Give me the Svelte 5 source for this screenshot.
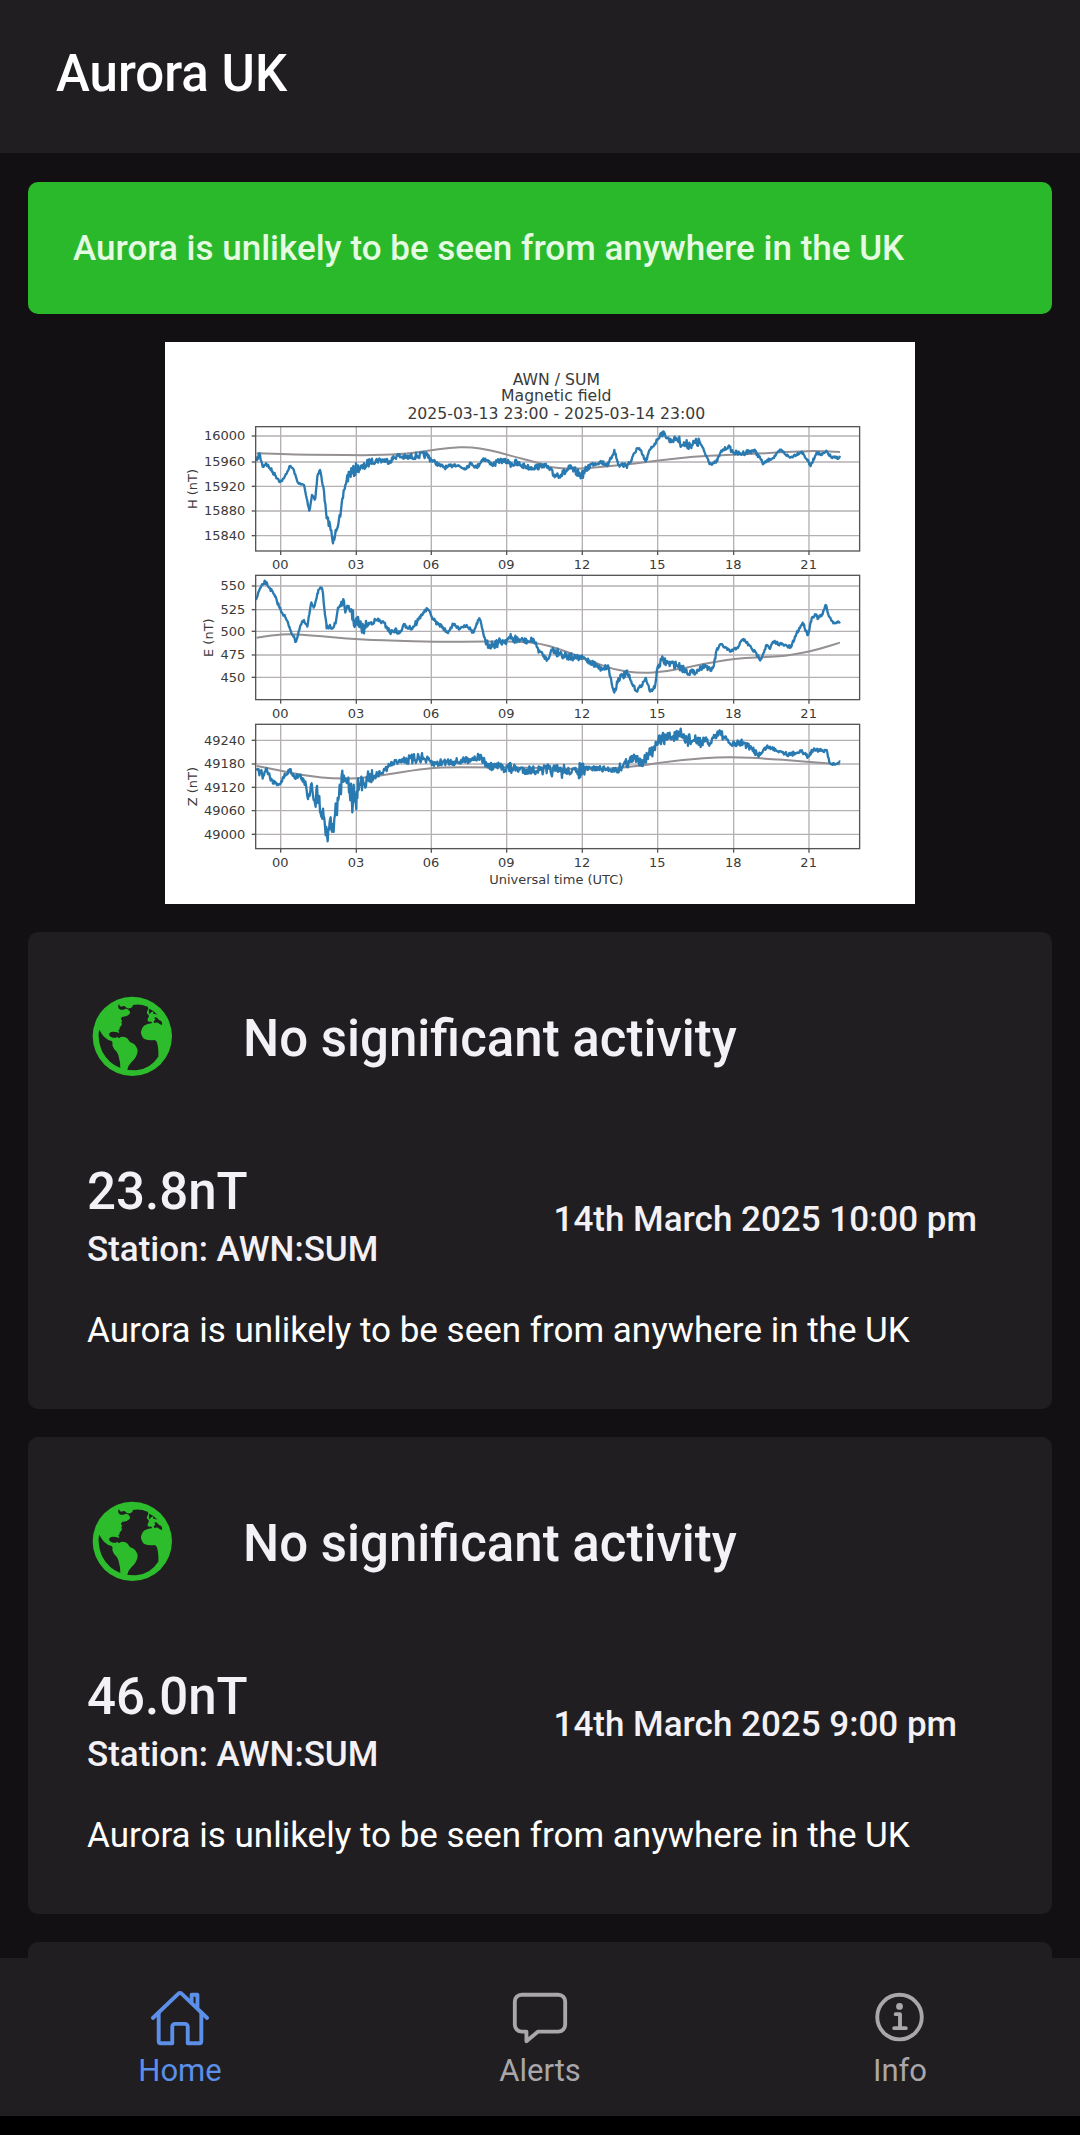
<script>
    let tabs = ["Home", "Alerts", "Info"];
    let current = "Home";
    let status = "Aurora is unlikely to be seen from anywhere in the UK";
    let activities = [
        { value: "23.8nT", date: "14th March 2025 10:00 pm" },
        { value: "46.0nT", date: "14th March 2025 9:00 pm" },
    ];

    let hours = ["00", "03", "06", "09", "12", "15", "18", "21"];
    let hourX = [362, 589, 814, 1040, 1267, 1493, 1721, 1947];

    // points are [x, y] or [x, y, jitter], the jitter stays until the next one
    let panels = [
        {
            label: "H (nT)",
            labelX: 110,
            top: 275,
            ticks: [[16000, 303], [15960, 381], [15920, 454], [15880, 528], [15840, 602]],
            base: [[290, 355], [400, 359], [500, 359], [620, 361], [720, 358], [800, 348], [870, 338], [930, 336], [990, 345], [1040, 359], [1140, 385], [1170, 397], [1240, 402], [1330, 396], [1420, 386], [1500, 376], [1600, 365], [1700, 360], [1800, 356], [1900, 349], [1980, 348], [2040, 351]],
            line: [[290, 378, 6], [298, 355], [308, 395], [318, 385], [330, 400], [345, 420], [362, 440, 3], [372, 430], [390, 393], [400, 402], [412, 440], [422, 448], [432, 450], [440, 490], [448, 527, 7], [456, 480], [466, 490], [472, 425], [480, 405], [490, 455], [500, 550, 11], [510, 570], [519, 625], [527, 585], [541, 545], [552, 465], [560, 435, 18], [570, 410], [576, 415], [590, 400, 13], [610, 398], [630, 380, 9], [660, 375], [690, 378], [710, 362], [740, 368, 10], [770, 362], [800, 360], [815, 375, 6], [840, 392], [860, 398], [885, 388], [913, 400], [935, 385], [950, 398], [970, 370], [1000, 390, 8], [1020, 376], [1050, 382, 14], [1080, 390, 8], [1110, 398], [1140, 395], [1150, 388], [1165, 400, 12], [1180, 420], [1210, 415], [1230, 400], [1250, 412], [1265, 422], [1290, 390, 7], [1320, 380], [1345, 390], [1363, 345], [1375, 390, 10], [1402, 390], [1415, 375, 6], [1430, 340], [1440, 345], [1457, 380], [1470, 345], [1492, 315, 8], [1502, 295], [1515, 298], [1530, 318], [1550, 310, 14], [1570, 330], [1590, 328], [1620, 322, 5], [1635, 355], [1650, 385], [1668, 383], [1685, 348], [1705, 335, 7], [1720, 352], [1740, 357], [1780, 346], [1795, 360, 4], [1810, 387], [1830, 372], [1840, 368], [1862, 345], [1890, 368], [1905, 360], [1925, 350], [1940, 372], [1952, 393], [1970, 352], [1985, 360], [2000, 350], [2015, 368], [2040, 368]],
        },
        {
            label: "E (nT)",
            labelX: 160,
            top: 721,
            ticks: [[550, 753], [525, 824], [500, 889], [475, 960], [450, 1027]],
            base: [[290, 908], [340, 900], [390, 897], [460, 901], [560, 911], [660, 916], [860, 921], [960, 919], [1080, 920], [1140, 925], [1200, 943], [1290, 977], [1360, 1004], [1440, 1015], [1520, 1010], [1600, 993], [1720, 970], [1860, 965], [1920, 955], [1980, 942], [2040, 923]],
            line: [[288, 795, 5], [298, 765], [315, 740], [330, 760], [345, 785], [362, 825], [375, 845], [388, 875], [400, 905], [408, 920], [420, 875], [430, 857], [442, 875], [450, 825, 7], [455, 805], [462, 815], [475, 765], [487, 763], [493, 820], [500, 880], [510, 870], [518, 880], [527, 865], [534, 818, 13], [548, 800], [558, 825], [575, 825, 24], [580, 855], [600, 870, 16], [610, 885], [620, 870, 7], [650, 855], [665, 860], [680, 875], [690, 893], [705, 885], [718, 895], [735, 868, 10], [755, 880], [775, 855, 5], [790, 832], [803, 822], [815, 845], [830, 865], [845, 873], [862, 893], [880, 868], [895, 880], [920, 870], [940, 893], [958, 850], [968, 885], [978, 928, 13], [1000, 928], [1030, 918], [1050, 910, 14], [1080, 915, 9], [1110, 920], [1120, 912], [1130, 935], [1140, 950, 6], [1162, 975], [1175, 945, 13], [1200, 955], [1240, 968, 9], [1270, 970], [1300, 985], [1320, 1000], [1345, 995], [1355, 1045], [1363, 1073], [1375, 1030, 10], [1402, 1015], [1415, 1045, 5], [1430, 1068], [1445, 1050], [1458, 1030], [1470, 1070], [1485, 1055], [1492, 1000, 12], [1505, 975], [1525, 985], [1550, 990], [1575, 1005], [1600, 1015, 7], [1635, 990], [1652, 1008], [1662, 990], [1670, 945, 5], [1684, 928], [1710, 950], [1730, 940], [1750, 912], [1775, 940], [1802, 973], [1820, 930], [1830, 942], [1840, 920], [1870, 930], [1893, 937], [1910, 895], [1928, 863], [1944, 900], [1955, 850], [1965, 838], [1975, 850], [1988, 838], [1997, 810], [2008, 845, 3], [2020, 865], [2040, 860]],
        },
        {
            label: "Z (nT)",
            labelX: 110,
            top: 1168,
            ticks: [[49240, 1216], [49180, 1287], [49120, 1357], [49060, 1427], [49000, 1498]],
            base: [[290, 1293], [330, 1300], [430, 1322], [540, 1333], [640, 1326], [760, 1305], [840, 1297], [960, 1297], [1100, 1298], [1200, 1300], [1300, 1304], [1420, 1295], [1560, 1274], [1700, 1265], [1840, 1272], [2040, 1288]],
            line: [[290, 1300, 14], [300, 1310], [310, 1320, 8], [318, 1300], [335, 1335], [345, 1345], [362, 1345], [375, 1320], [390, 1305], [405, 1325], [420, 1322], [432, 1340, 17], [445, 1385], [455, 1345], [465, 1405, 26], [472, 1370], [485, 1430], [493, 1450, 36], [501, 1500], [510, 1455], [517, 1480], [525, 1440, 30], [535, 1395], [548, 1330, 12], [563, 1345, 40], [575, 1380, 54], [590, 1370, 34], [600, 1350, 24], [612, 1345], [620, 1325, 20], [640, 1325, 9], [670, 1310], [690, 1290], [720, 1275], [735, 1275, 16], [760, 1275], [776, 1265], [800, 1275, 11], [820, 1287], [860, 1280], [900, 1280], [960, 1265], [985, 1295, 12], [1030, 1295, 18], [1055, 1300, 13], [1100, 1305], [1140, 1305, 18], [1200, 1308, 24], [1215, 1308, 11], [1255, 1308, 24], [1275, 1303, 8], [1300, 1300], [1370, 1305, 13], [1390, 1290, 17], [1420, 1272], [1450, 1277], [1465, 1260, 20], [1485, 1245], [1495, 1215, 18], [1530, 1205], [1560, 1204, 24], [1590, 1215, 17], [1650, 1225, 10], [1665, 1200, 12], [1680, 1190], [1690, 1205, 8], [1715, 1230, 10], [1750, 1222], [1770, 1240], [1800, 1260, 6], [1820, 1235], [1860, 1248], [1890, 1260], [1920, 1247], [1945, 1265], [1962, 1240], [1990, 1250], [2000, 1245], [2010, 1285, 3], [2025, 1288], [2040, 1280]],
        },
    ];

    let seed = 7;
    let random = () => {
        seed = (seed * 16807) % 2147483647;
        return seed / 2147483647;
    };

    let noisy = (points) => {
        let d = "M" + points[0][0] + " " + points[0][1];
        let jitter = 0;
        for (let i = 1; i < points.length; i++) {
            let [x0, y0, j] = points[i - 1];
            let [x1, y1] = points[i];
            if (j) jitter = j;
            for (let x = x0 + 2; x < x1; x += 2) {
                let y = y0 + ((y1 - y0) * (x - x0)) / (x1 - x0);
                y += (random() * 2 - 1) * jitter;
                d += "L" + x + " " + y.toFixed(1);
            }
            d += "L" + x1 + " " + y1;
        }
        return d;
    };

    let smooth = (points) => {
        let d = "M" + points[0].join(" ");
        for (let i = 1; i < points.length - 1; i++) {
            let [x, y] = points[i];
            let [nx, ny] = points[i + 1];
            d += `Q${x} ${y} ${(x + nx) / 2} ${(y + ny) / 2}`;
        }
        return d + "L" + points[points.length - 1].join(" ");
    };
</script>

<div class="app">
    <header>
        <h1>Aurora UK</h1>
    </header>

    <main>
        <p class="banner">{status}</p>

        <svg class="chart" viewBox="15 21 2250 1686" role="img" aria-label="Magnetic field">
            <g class="title">
                <text x="1189" y="151">AWN / SUM</text>
                <text x="1189" y="199">Magnetic field</text>
                <text x="1189" y="251">2025-03-13 23:00 - 2025-03-14 23:00</text>
            </g>
            {#each panels as p}
                {#each hours as hour, i}
                    <path class="grid" d="M{hourX[i]} {p.top}v373" />
                    <path class="tick" d="M{hourX[i]} {p.top + 373}v12" />
                    <text class="hour" x={hourX[i] - 1} y={p.top + 428}>{hour}</text>
                {/each}
                {#each p.ticks as [value, y]}
                    <path class="grid" d="M287 {y}h1812" />
                    <path class="tick" d="M275 {y}h12" />
                    <text class="value" x="256" y={y + 13}>{value}</text>
                {/each}
                <path class="base" d={smooth(p.base)} />
                <path class="line" d={noisy(p.line)} />
                <rect class="frame" x="287" y={p.top} width="1812" height="373" />
                <text
                    class="hour"
                    transform="translate({p.labelX} {p.top + 187}) rotate(-90)">{p.label}</text
                >
            {/each}
            <text class="hour" x="1189" y="1648">Universal time (UTC)</text>
        </svg>

        {#each activities as a}
            <article class="card">
                <div class="heading">
                    <svg class="globe" viewBox="0 0 270 270" aria-hidden="true">
                        <path
                            fill-rule="evenodd"
                            d="M136 17a119 119 0 1 0 0 238a119 119 0 1 0 0-238z
                            M137 42Q158 37 182 47Q186 53 181 60Q177 67 184 71Q188 75 182 84Q180 91 187 92Q194 90 196 96Q180 98 173 103Q162 112 162 126Q165 141 174 145Q186 149 204 147Q211 151 212 163Q215 180 214 197Q190 234 147 238L121 237Q124 222 133 214Q150 199 152 181Q150 164 137 157Q126 153 122 143Q113 135 101 138Q95 144 91 137Q85 143 74 139Q66 136 66 128Q70 121 80 122L91 124Q97 128 97 122L93 119Q99 117 98 109Q103 107 105 99Q101 94 106 89Q98 85 106 77Q117 79 128 69Q131 61 124 56Q116 51 111 56Q102 58 96 53Q91 47 96 39Q98 50 107 46Q112 43 116 48Q121 55 131 51Q139 49 137 42z
                            M37 116Q44 129 51 137Q61 147 74 150Q78 153 76 163Q79 174 89 182Q94 190 96 200Q100 213 100 231Q65 218 47 184Q36 162 35 136Q34 124 37 116z
                            M187 53Q202 59 212 72Q205 68 198 68L199 61Q192 63 187 70Q184 61 187 53z
                            M203 78Q211 78 216 87Q227 89 225 102Q218 100 213 95Q207 94 203 96Q199 94 201 89Q208 88 203 83z"
                        />
                    </svg>
                    <h2>No significant activity</h2>
                </div>
                <div class="reading">
                    <div>
                        <p class="amount">{a.value}</p>
                        <p class="station">Station: AWN:SUM</p>
                    </div>
                    <p class="station">{a.date}</p>
                </div>
                <p class="detail">{status}</p>
            </article>
        {/each}
        <div class="card"></div>
    </main>

    <nav>
        {#each tabs as tab}
            <a href="#{tab.toLowerCase()}" class:selected={tab == current}>
                <svg viewBox="0 0 512 512" aria-hidden="true">
                    {#if tab == "Home"}
                        <path d="M80 212v236a16 16 0 0016 16h96V328a24 24 0 0124-24h80a24 24 0 0124 24v136h96a16 16 0 0016-16V212" />
                        <path d="M480 256L266.89 52c-5-5.28-16.69-5.34-21.78 0L32 256M400 179V64h-48v69" />
                    {:else if tab == "Alerts"}
                        <path d="M408 64H104a56.16 56.16 0 00-56 56v192a56.16 56.16 0 0056 56h40v80l93.72-78.14a8 8 0 015.13-1.86H408a56.16 56.16 0 0056-56V120a56.16 56.16 0 00-56-56z" />
                    {:else}
                        <circle cx="252" cy="248" r="184" />
                        <path d="M220 224h36v112M208 340h96" />
                        <circle class="dot" cx="252" cy="160" r="28" />
                    {/if}
                </svg>
                <span>{tab}</span>
            </a>
        {/each}
    </nav>
</div>

<style>
    :global(body) {
        margin: 0;
        background: #000;
    }
    .app {
        display: flex;
        flex-direction: column;
        height: 100vh;
        box-sizing: border-box;
        padding-bottom: 19px;
        font-family: Roboto, sans-serif;
        color: #f4f1f6;
    }
    h1,
    h2,
    p {
        margin: 0;
        font-weight: 500;
    }
    header {
        flex: none;
        padding: 44px 56px 49px;
        background: #201e21;
        color: #fff;
    }
    h1,
    h2,
    .amount {
        font-size: 51px;
        line-height: 60px;
    }
    main {
        flex: 1;
        min-height: 0;
        overflow: hidden;
        display: flex;
        flex-direction: column;
        gap: 28px;
        padding: 29px 28px 0;
        background: #121013;
    }
    .banner {
        flex: none;
        padding: 42px 45px 40px;
        border-radius: 10px;
        background: #2ab92b;
        color: #e4fbe2;
        font-size: 35px;
        line-height: 50px;
    }
    .chart {
        flex: none;
        align-self: center;
        width: 73.24%;
        background: #fff;
        font-family: "DejaVu Sans", sans-serif;
        font-size: 39px;
        fill: #3a3a3a;
    }
    .title {
        font-size: 47px;
        text-anchor: middle;
    }
    .hour {
        text-anchor: middle;
    }
    .value {
        text-anchor: end;
    }
    .grid,
    .tick,
    .base,
    .line,
    .frame {
        fill: none;
        stroke-width: 4;
    }
    .grid {
        stroke: #b4b0b4;
    }
    .tick,
    .frame {
        stroke: #555;
    }
    .base {
        stroke: #949094;
        stroke-width: 6;
    }
    .line {
        stroke: #2a7ab2;
        stroke-width: 7;
        stroke-linejoin: round;
    }
    .card {
        flex: none;
        min-height: 360px;
        padding: 59px 60px 53px 59px;
        border-radius: 10px;
        background: #201e21;
    }
    .heading {
        display: flex;
        align-items: center;
        gap: 66px;
    }
    h2 {
        padding-top: 6px;
    }
    .globe {
        width: 90px;
        height: 90px;
        fill: #2dbd2c;
    }
    .reading {
        display: grid;
        grid-template-columns: 1fr 1fr;
        gap: 28px;
        align-items: center;
        margin: 81px 0 28px;
    }
    .station {
        font-size: 35px;
        line-height: 56px;
    }
    .detail {
        font-size: 35px;
        line-height: 50px;
        font-weight: 400;
        color: #fff;
    }
    nav {
        flex: none;
        display: grid;
        grid-template-columns: 1fr 1fr 1fr;
        background: #201e21;
    }
    a {
        display: flex;
        flex-direction: column;
        align-items: center;
        gap: 2px;
        padding: 29px 0 25px;
        color: #a9a7aa;
        font-size: 31px;
        line-height: 40px;
        text-decoration: none;
    }
    a.selected {
        color: #5b8fe8;
    }
    a svg {
        width: 62px;
        height: 62px;
        fill: none;
        stroke: currentColor;
        stroke-width: 32;
        stroke-linecap: round;
        stroke-linejoin: round;
    }
    a .dot {
        fill: currentColor;
        stroke: none;
    }
</style>
